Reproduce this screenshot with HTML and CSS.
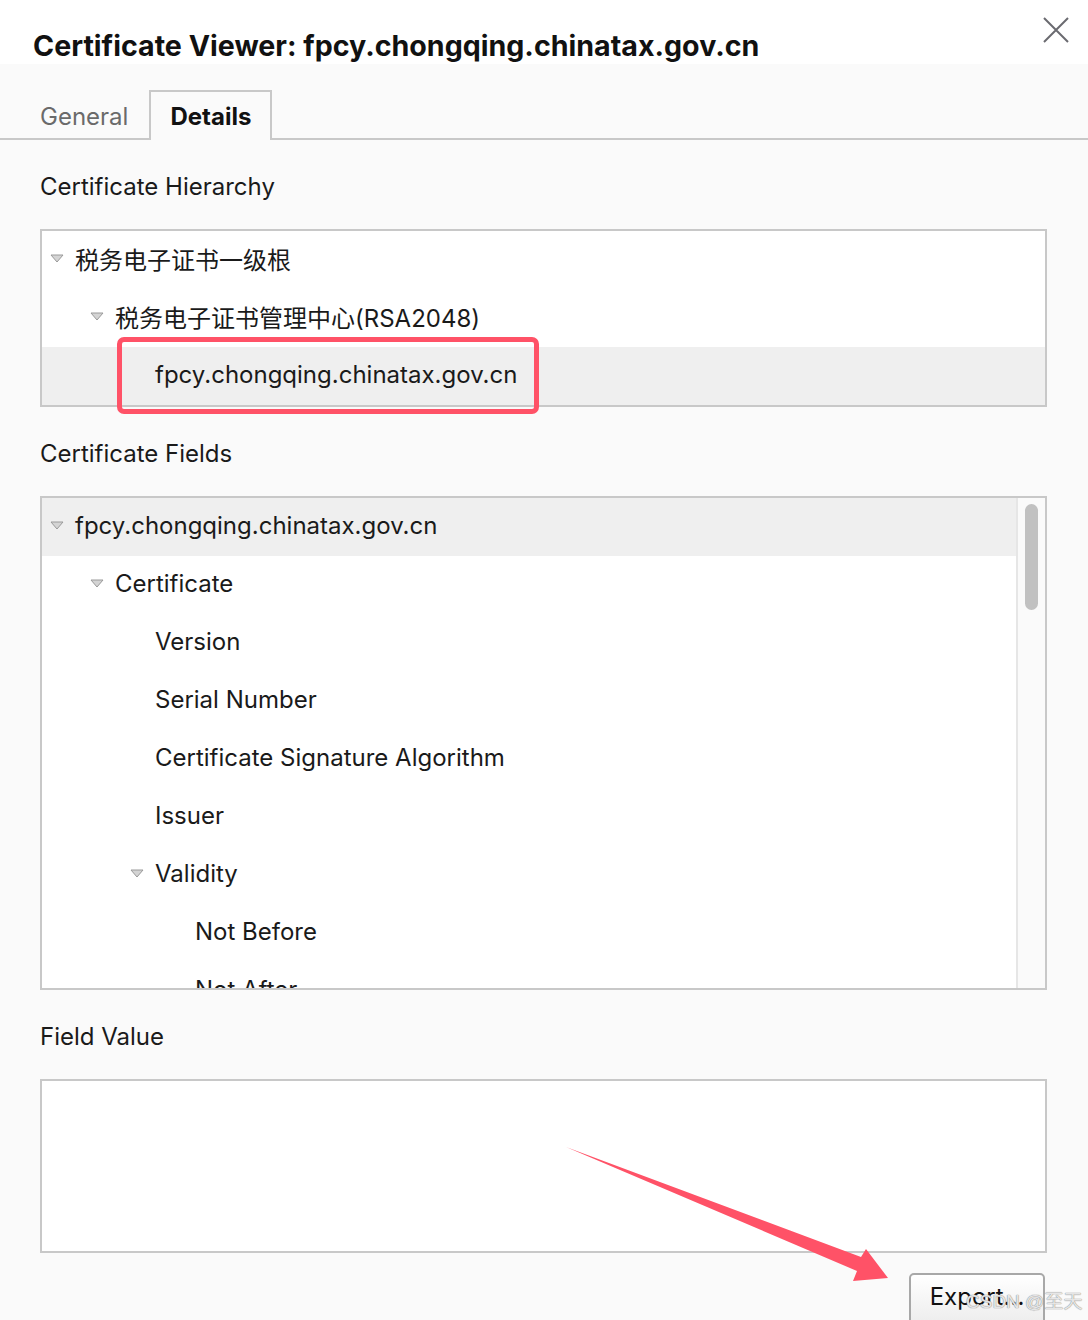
FILE: index.html
```html
<!DOCTYPE html>
<html>
<head>
<meta charset="utf-8">
<link rel="stylesheet" href="styles.css">
</head>
<body>
<div class="dialog">
  <header class="header">
    <h1 class="title">Certificate Viewer: fpcy.chongqing.chinatax.gov.cn</h1>
    <svg class="close" width="26" height="26" viewBox="0 0 26 26"><path d="M1 1 L25 25 M25 1 L1 25" stroke="#6a6a70" stroke-width="2" fill="none"/></svg>
  </header>
  <nav class="tabs">
    <div class="tab">General</div>
    <div class="tab active">Details</div>
  </nav>
  <main class="content">
    <div class="label">Certificate Hierarchy</div>
    <div class="box hierarchy">
      <div class="row lvl0"><svg class="tri" viewBox="0 0 14 9"><polygon points="1,1 13,1 7,8" fill="#d4d4d4" stroke="#9a9a9a" stroke-width="1"/></svg><span>税务电子证书一级根</span></div>
      <div class="row lvl1"><svg class="tri" viewBox="0 0 14 9"><polygon points="1,1 13,1 7,8" fill="#d4d4d4" stroke="#9a9a9a" stroke-width="1"/></svg><span>税务电子证书管理中心(RSA2048)</span></div>
      <div class="row lvl2 selected"><i class="sp"></i><span>fpcy.chongqing.chinatax.gov.cn</span></div>
      <div class="highlight"></div>
    </div>

    <div class="label">Certificate Fields</div>
    <div class="box fields">
      <div class="list">
        <div class="row lvl0 selected"><svg class="tri" viewBox="0 0 14 9"><polygon points="1,1 13,1 7,8" fill="#d4d4d4" stroke="#9a9a9a" stroke-width="1"/></svg><span>fpcy.chongqing.chinatax.gov.cn</span></div>
        <div class="row lvl1"><svg class="tri" viewBox="0 0 14 9"><polygon points="1,1 13,1 7,8" fill="#d4d4d4" stroke="#9a9a9a" stroke-width="1"/></svg><span>Certificate</span></div>
        <div class="row lvl2"><i class="sp"></i><span>Version</span></div>
        <div class="row lvl2"><i class="sp"></i><span>Serial Number</span></div>
        <div class="row lvl2"><i class="sp"></i><span>Certificate Signature Algorithm</span></div>
        <div class="row lvl2"><i class="sp"></i><span>Issuer</span></div>
        <div class="row lvl2"><svg class="tri" viewBox="0 0 14 9"><polygon points="1,1 13,1 7,8" fill="#d4d4d4" stroke="#9a9a9a" stroke-width="1"/></svg><span>Validity</span></div>
        <div class="row lvl3"><i class="sp"></i><span>Not Before</span></div>
        <div class="row lvl3"><i class="sp"></i><span>Not After</span></div>
      </div>
      <div class="scrollbar"><div class="thumb"></div></div>
    </div>

    <div class="label">Field Value</div>
    <div class="box value"></div>

    <div class="actions">
      <button class="btn">Export...</button>
    </div>
  </main>
  <svg class="arrow" width="1088" height="1320" viewBox="0 0 1088 1320"><polygon points="566,1147 861,1257 866,1249 888,1278 853,1281 857,1271" fill="#ff5267"/></svg>
  <div class="watermark">CSDN @至天</div>
</div>
</body>
</html>
```
FILE: styles.css
```css
html, body {
  margin: 0;
  padding: 0;
}
body {
  background: #fafafa;
  font-family: Inter, "Noto Sans CJK SC", sans-serif;
  color: #1a1a1a;
  width: 1088px;
  height: 1320px;
  overflow: hidden;
}
.dialog {
  position: relative;
  width: 1088px;
  height: 1320px;
}
.header {
  background: #ffffff;
  height: 64px;
  display: flex;
  justify-content: space-between;
  align-items: flex-start;
  padding: 0 19px 0 33px;
}
.title {
  margin: 0;
  padding-top: 27px;
  font-size: 28.6px;
  line-height: 38px;
  font-weight: 700;
  color: #111;
  white-space: nowrap;
}
.close {
  margin-top: 17px;
}
.tabs {
  display: flex;
  margin-top: 28px;
  border-bottom: 2px solid #c8c8c8;
  padding-left: 40px;
  height: 46px;
}
.tab {
  font-size: 24px;
  line-height: 50px;
  color: #6a6a6a;
  padding-right: 21px;
}
.tab.active {
  color: #111;
  font-weight: 700;
  border: 2px solid #c8c8c8;
  border-bottom: none;
  background: #fafafa;
  padding: 0 19px 0 19px;
  height: 48px;
  line-height: 50px;
  margin-top: -2px;
}
.content {
  padding: 0 41px 0 40px;
}
.label {
  font-size: 24px;
  line-height: 30px;
  padding-top: 32px;
  margin-bottom: 27px;
}
.box {
  border: 2px solid #c8c8c8;
  background: #ffffff;
  position: relative;
}
.row {
  height: 58px;
  display: flex;
  align-items: center;
  font-size: 24px;
  white-space: nowrap;
}
.row span {
  position: relative;
  top: -2px;
}
.row.selected {
  background: #efefef;
}
.lvl0 { padding-left: 8px; }
.lvl1 { padding-left: 48px; }
.lvl2 { padding-left: 88px; }
.lvl3 { padding-left: 128px; }
.tri {
  width: 14px;
  height: 9px;
  margin-right: 11px;
  flex: none;
  position: relative;
  top: -2px;
}
.sp {
  width: 25px;
  flex: none;
}
.highlight {
  position: absolute;
  left: 75px;
  top: 106px;
  width: 412px;
  height: 67px;
  border: 5px solid #ff5267;
  border-radius: 7px;
}
.fields {
  display: flex;
  height: 490px;
  overflow: hidden;
}
.list {
  flex: 1;
  overflow: hidden;
}
.scrollbar {
  width: 29px;
  border-left: 2px solid #e6e6e6;
  background: #fafafa;
  flex: none;
  box-sizing: border-box;
  padding: 6px 0 0 7px;
}
.thumb {
  width: 13px;
  height: 106px;
  border-radius: 7px;
  background: #c1c1c1;
}
.value {
  height: 170px;
}
.actions {
  display: flex;
  justify-content: flex-end;
  padding-top: 20px;
  padding-right: 2px;
}
.btn {
  width: 136px;
  height: 52px;
  border: 2px solid #a8a8a8;
  border-radius: 5px;
  background: linear-gradient(#ffffff, #ededed);
  font-family: Inter, sans-serif;
  font-size: 24px;
  color: #111;
  padding: 0 0 6px 0;
}
.arrow {
  position: absolute;
  left: 0;
  top: 0;
  pointer-events: none;
}
.watermark {
  position: absolute;
  left: 966px;
  top: 1289px;
  font-size: 19px;
  line-height: 26px;
  white-space: nowrap;
  font-family: "Liberation Sans", "Noto Sans CJK SC", sans-serif;
  color: rgba(255, 255, 255, 0.8);
  text-shadow: 0 0 1px #8a8a8a, 0 0 1px #8a8a8a;
}
```
